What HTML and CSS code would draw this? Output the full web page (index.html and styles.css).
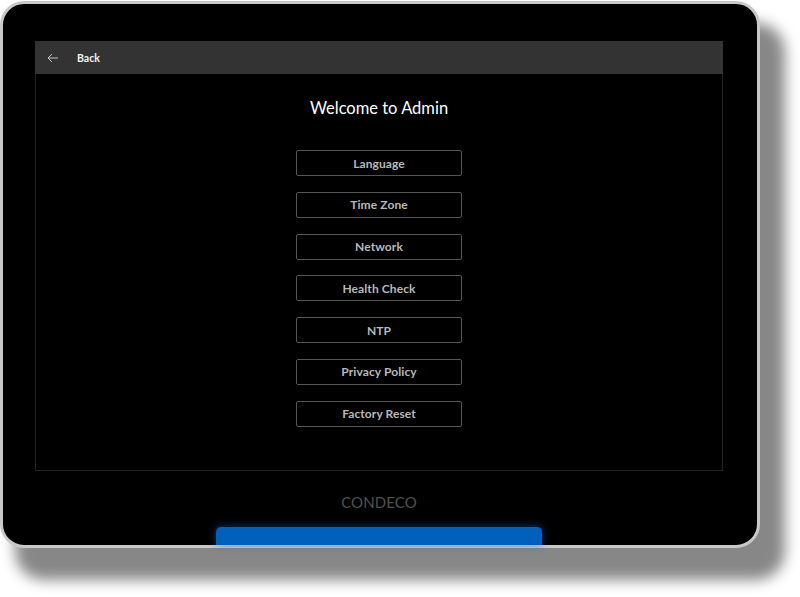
FILE: index.html
```html
<!DOCTYPE html>
<html lang="en">
<head>
    <meta charset="UTF-8">
    <meta name="viewport" content="width=device-width, initial-scale=1.0">
    <title>Admin</title>
    <link rel="stylesheet" href="styles.css">
</head>
<body>
    <div class="device">
        <div class="panel">
            <div class="top-bar">
                <svg class="back-icon" width="12" height="10" viewBox="0 0 12 10" fill="none" stroke="#c4c4c4" stroke-width="1">
                    <path d="M11 5H1.2M5 1L1 5l4 4"/>
                </svg>
                <span class="back-label">Back</span>
            </div>
            <h1 class="title">Welcome to Admin</h1>
            <div class="menu">
                <button class="menu-button">Language</button>
                <button class="menu-button">Time Zone</button>
                <button class="menu-button">Network</button>
                <button class="menu-button">Health Check</button>
                <button class="menu-button">NTP</button>
                <button class="menu-button">Privacy Policy</button>
                <button class="menu-button">Factory Reset</button>
            </div>
        </div>
        <div class="brand">CONDECO</div>
        <div class="bottom-tab"></div>
    </div>
</body>
</html>
```

FILE: styles.css
```css
*, *::before, *::after {
    box-sizing: border-box;
    margin: 0;
    padding: 0;
}
html, body {
    height: 100%;
}
body {
    background-color: #ffffff;
    font-family: 'Lato', 'Open Sans', sans-serif;
    overflow: hidden;
    padding: 1px 0 0 0;
}
.device {
    width: 760px;
    height: 547px;
    background-color: #000000;
    border: 3px solid #c9c9c9;
    border-radius: 24px;
    box-shadow: 20px 27px 14px 5px rgba(0, 0, 0, 0.47);
    padding: 37px 34px 0 32px;
    display: flex;
    flex-direction: column;
    align-items: center;
}
.panel {
    width: 688px;
    height: 430px;
    border: 1px solid #222222;
    border-top: none;
    display: flex;
    flex-direction: column;
    align-items: center;
    flex-shrink: 0;
}
.top-bar {
    width: 688px;
    height: 33px;
    margin: 0 -1px;
    flex-shrink: 0;
    background-color: #333333;
    display: flex;
    align-items: center;
    padding-left: 12px;
}
.back-label {
    margin-left: 18px;
    font-size: 10.5px;
    font-weight: 700;
    color: #f0f0f0;
}
.title {
    margin-top: 23px;
    font-size: 16.5px;
    line-height: 22px;
    font-weight: 400;
    color: #ffffff;
}
.menu {
    margin-top: 31px;
    display: flex;
    flex-direction: column;
    gap: 15.8px;
}
.menu-button {
    width: 166px;
    height: 26px;
    background-color: #000000;
    border: 1px solid #555555;
    border-radius: 2px;
    color: #b8b8b8;
    font-family: inherit;
    font-size: 12px;
    font-weight: 700;
    letter-spacing: 0.1px;
}
.brand {
    margin-top: 22px;
    font-size: 15px;
    line-height: 18px;
    letter-spacing: 0.1px;
    color: #505050;
}
.bottom-tab {
    margin-top: auto;
    width: 326px;
    height: 18px;
    flex-shrink: 0;
    background-color: #0060bb;
    border-radius: 5px 5px 0 0;
    box-shadow: 0 0 8px rgba(0, 110, 220, 0.55);
}
```
